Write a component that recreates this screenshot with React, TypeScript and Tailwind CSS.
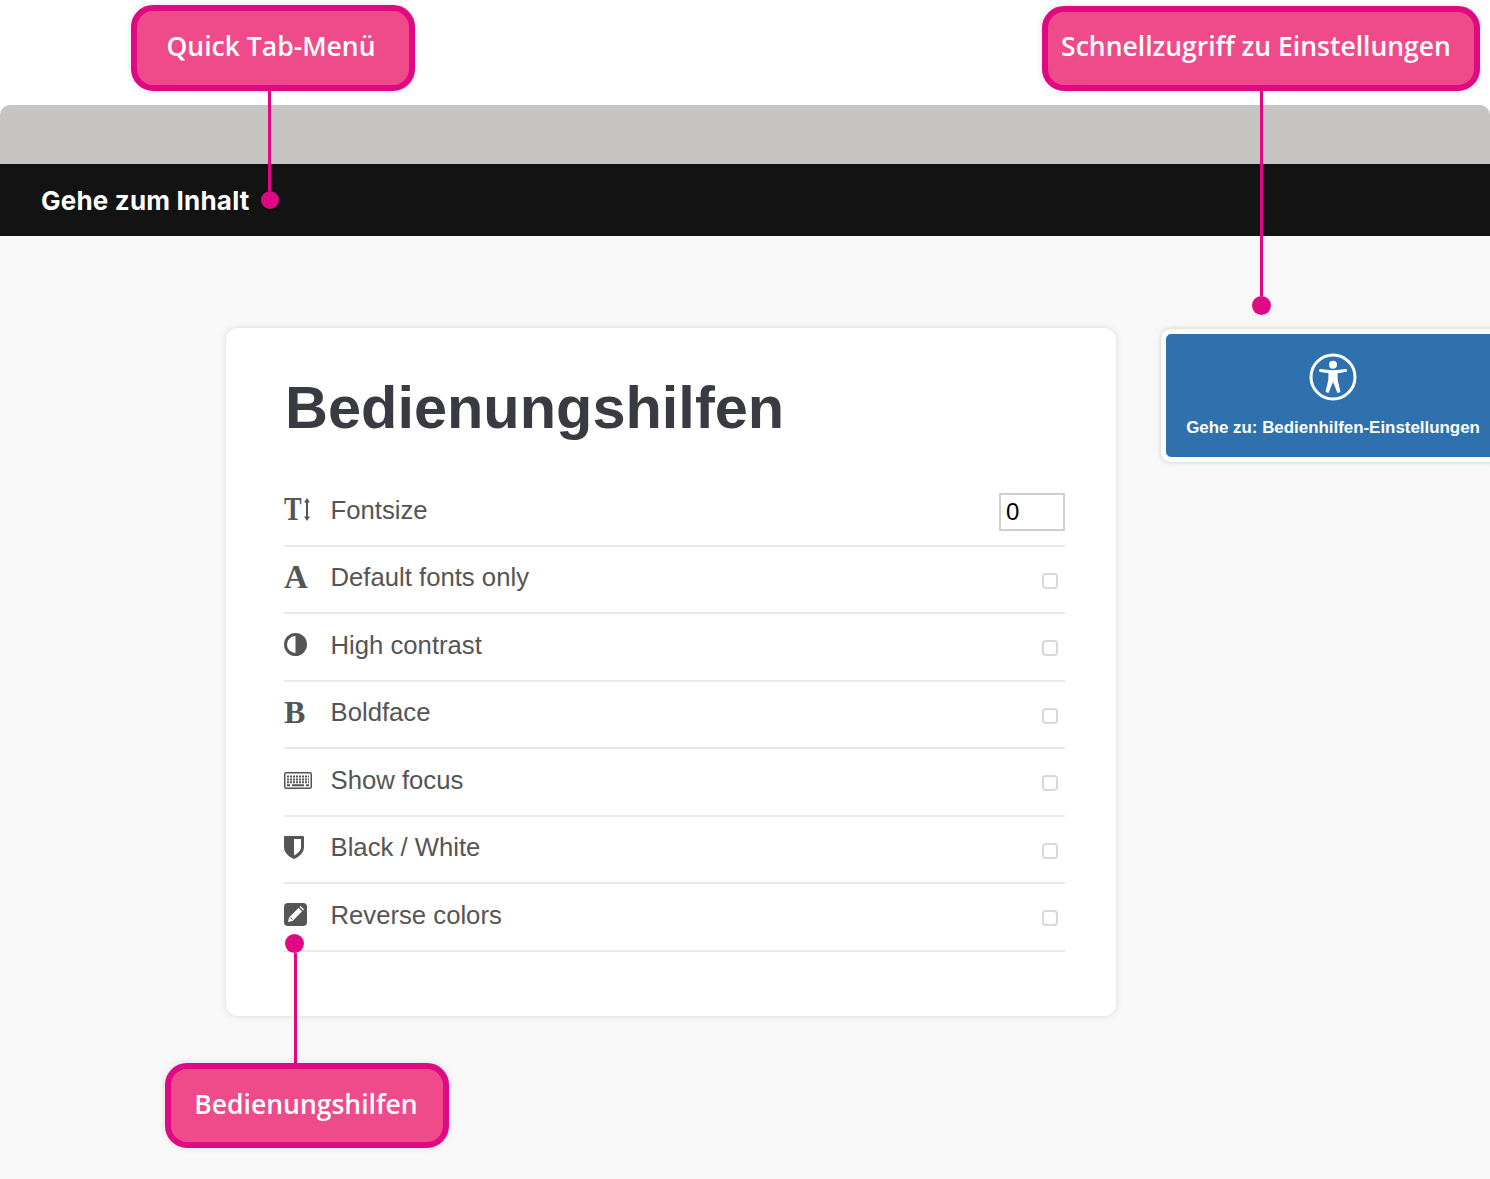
import type { ReactNode } from "react";

const sans = "font-['Liberation_Sans',Arial,sans-serif]";

function ArrowT() {
  return (
    <span className="flex items-center">
      <span className="origin-left scale-x-[0.8] font-['Liberation_Serif',serif] text-[33px] font-bold leading-none">T</span>
      <svg width="6" height="23" viewBox="0 0 6 23" className="-ml-[2px]" fill="currentColor">
        <path d="M3 0 6 4.500H4v14h2L3 23 0 18.500h2v-14H0z" />
      </svg>
    </span>
  );
}

function HalfCircle() {
  return (
    <svg width="23" height="23" viewBox="0 0 23 23" fill="currentColor">
      <path fillRule="evenodd" d="M11.500 0a11.500 11.500 0 1 0 0 23 11.500 11.500 0 0 0 0-23zM11.500 3v17a8.500 8.500 0 0 1 0-17z" />
    </svg>
  );
}

function KeyboardIcon() {
  return (
    <svg width="28" height="17" viewBox="0 0 28 17" fill="none" stroke="currentColor" className="mt-[2px]">
      <rect x="0.75" y="0.75" width="26.5" height="15.5" rx="1.5" strokeWidth="1.5" />
      <path d="M3 4.500h22M3 7.500h22M3 10.250h22" strokeWidth="1.8" strokeDasharray="2 1" />
      <path d="M8 13.250h12M3 13.250h3M22 13.250h3" strokeWidth="1.8" />
    </svg>
  );
}

function ShieldIcon() {
  return (
    <svg width="20" height="23" viewBox="0 0 20 23" fill="currentColor">
      <path fillRule="evenodd" d="M1 0h18a1 1 0 0 1 1 1v10c0 6-5.500 10-10 12C5.500 21 0 17 0 11V1a1 1 0 0 1 1-1zm9 3v16.500c3-1.600 7-4.500 7-8.500V3z" />
    </svg>
  );
}

function PencilSquare() {
  return (
    <svg width="23" height="23" viewBox="0 0 23 23">
      <rect width="23" height="23" rx="4" fill="currentColor" />
      <path d="M4 19l1-4.500L14.500 5l3.500 3.500L8.500 18z" fill="#fff" />
      <path d="M15.500 4l1-1 3.500 3.500-1 1z" fill="#fff" />
      <path d="M6.500 14.500l2 2" stroke="currentColor" strokeWidth="1" />
    </svg>
  );
}

function AccessIcon() {
  return (
    <svg width="48" height="48" viewBox="0 0 48 48" fill="#fff">
      <circle cx="24" cy="24" r="22" fill="none" stroke="#fff" strokeWidth="3" />
      <circle cx="24" cy="11.700" r="4" />
      <path d="M11.500 17.500c8 1.500 17 1.500 25 0" fill="none" stroke="#fff" strokeWidth="3" strokeLinecap="round" />
      <path d="M19.500 18.500h9l.2 8.500L31.500 39l-3 1L24 29l-4.500 11-3-1 2.800-12z" />
    </svg>
  );
}

const rows: { label: string; icon: ReactNode }[] = [
  { label: "Fontsize", icon: <ArrowT /> },
  { label: "Default fonts only", icon: <span className="font-['Liberation_Serif',serif] text-[33px] font-bold leading-none">A</span> },
  { label: "High contrast", icon: <HalfCircle /> },
  { label: "Boldface", icon: <span className="font-['Liberation_Serif',serif] text-[32px] font-bold leading-none">B</span> },
  { label: "Show focus", icon: <KeyboardIcon /> },
  { label: "Black / White", icon: <ShieldIcon /> },
  { label: "Reverse colors", icon: <PencilSquare /> },
];

function Callout({ className, children }: { className: string; children: ReactNode }) {
  return (
    <div
      className={`flex items-center justify-center rounded-[22px] border-[6px] border-[#df0984] bg-[#ef4a8a] font-['Open_Sans',sans-serif] text-[26.500px] font-semibold whitespace-nowrap text-white shadow-[0_0_6px_rgba(0,0,0,0.12)] ${className}`}
    >
      {children}
    </div>
  );
}

const dot = "rounded-full bg-[#df0984]";
const line = "w-[3px] bg-[#df0984]";

export default function App() {
  return (
    <div className={`relative h-[1179px] w-full overflow-hidden bg-[#f8f8f8] ${sans}`}>
      <header className="bg-white pt-[105px]">
        <div className="h-[59px] rounded-t-[10px] bg-[#c6c5c3]" />
        <div className="flex h-[72px] items-center bg-[#131313] pl-[41px] font-['Inter',sans-serif] text-[26px] font-bold tracking-[0.2px] text-white">
          Gehe zum Inhalt
        </div>
      </header>

      <main className="flex items-start pt-[92px] pl-[226px]">
        <section className="h-[688px] w-[890px] shrink-0 rounded-[12px] bg-white pt-[41px] pr-[51px] pl-[58px] shadow-[0_0_6px_rgba(0,0,0,0.13)]">
          <h1 className="h-[110px] pl-px text-[59.500px] leading-[78px] font-bold text-[#3a3a42]">Bedienungshilfen</h1>
          {rows.map((row, i) => (
            <div key={row.label} className="flex h-[67.500px] items-center border-b-2 border-[#e9e9e9] text-[#555]">
              <div className="mb-[4px] flex w-[46.500px] shrink-0 items-center">{row.icon}</div>
              <span className="mb-[3px] text-[25.700px]">{row.label}</span>
              {i === 0 ? (
                <div className="ml-auto flex h-[38px] w-[66px] items-center border-2 border-[#cfcfcf] pt-[1px] pl-[5px] text-[24px] text-black">0</div>
              ) : (
                <div className="mt-[3px] mr-[7px] ml-auto h-[16px] w-[16px] rounded-[4px] border-2 border-[#d8d8d8] bg-white" />
              )}
            </div>
          ))}
        </section>

        <aside className="mt-px ml-[45px] flex h-[133px] w-[340px] shrink-0 flex-col items-center rounded-[10px] border-[5px] border-r-0 border-white bg-[#2e71ae] pt-[19px] pr-px text-white shadow-[0_0_5px_rgba(0,0,0,0.2)]">
          <AccessIcon />
          <span className="mt-[14px] text-[16.900px] font-bold whitespace-nowrap">Gehe zu: Bedienhilfen-Einstellungen</span>
        </aside>
      </main>

      <div className="absolute top-[5px] left-[131px] flex flex-col">
        <Callout className="h-[86px] w-[284px] pr-[4px] pb-[2px]">Quick Tab-Menü</Callout>
        <div className={`ml-[137px] h-[100px] ${line}`} />
        <div className={`ml-[130px] h-[18px] w-[18px] ${dot}`} />
      </div>

      <div className="absolute top-[6px] left-[1042px] flex flex-col">
        <Callout className="h-[85px] w-[438px] pr-[10px] pb-[4px]">Schnellzugriff zu Einstellungen</Callout>
        <div className={`ml-[218px] h-[205px] ${line}`} />
        <div className={`ml-[210px] h-[19px] w-[19px] ${dot}`} />
      </div>

      <div className="absolute top-[934px] left-[165px] flex flex-col">
        <div className={`ml-[120px] h-[19px] w-[19px] ${dot}`} />
        <div className={`ml-[129px] h-[110px] ${line}`} />
        <Callout className="h-[85px] w-[284px] pr-[2px] pb-[2px]">Bedienungshilfen</Callout>
      </div>
    </div>
  );
}
